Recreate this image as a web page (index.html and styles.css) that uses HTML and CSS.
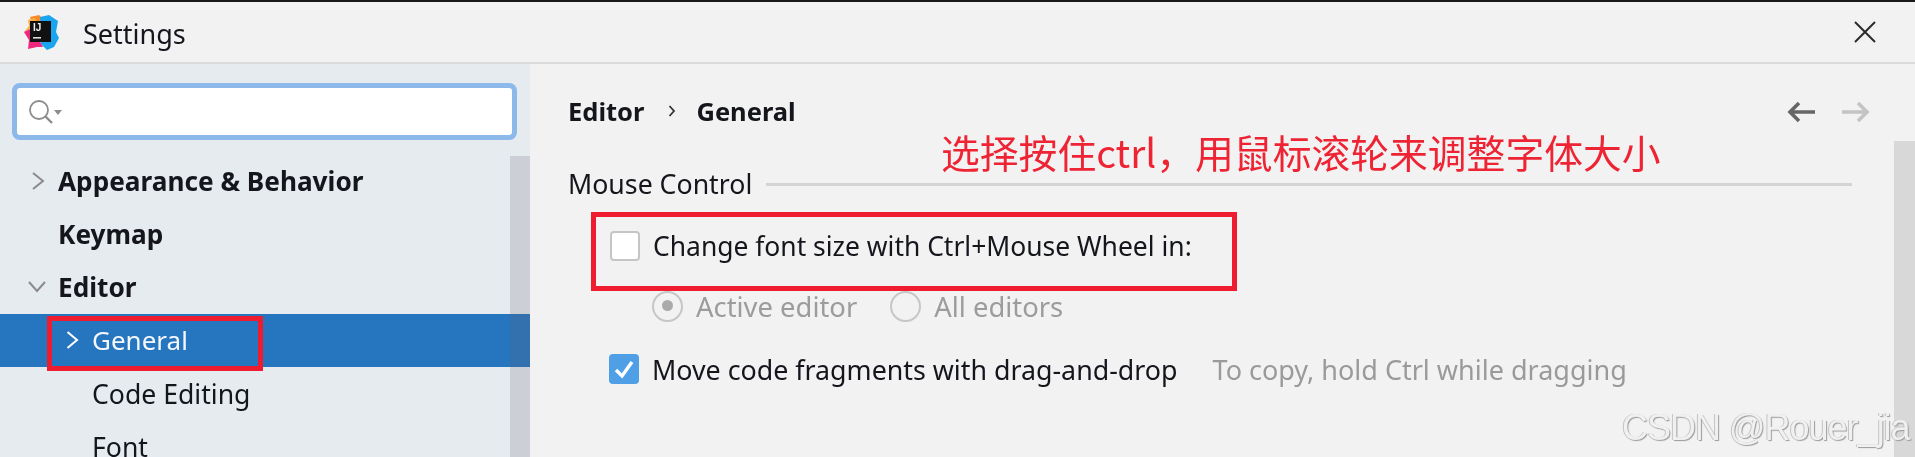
FILE: index.html
```html
<!DOCTYPE html>
<html lang="en">
<head>
<meta charset="utf-8">
<title>Settings</title>
<link rel="stylesheet" href="styles.css">
</head>
<body>
<div class="app">
  <header class="titlebar">
    <svg class="logo" width="36" height="36" viewBox="0 0 36 36">
      <path d="M7 3 L16 1 L20 5 L10 12 Z" fill="#f98a2c"/>
      <path d="M17 3 L26 1 L35 7 L33 18 L36 24 L31 33 L24 36 L18 30 Z" fill="#1aa5ee"/>
      <path d="M5 6 L12 4 L14 10 L8 14 L1 18 L6 12 Z" fill="#fbb03b"/>
      <path d="M1 18 L9 14 L14 22 L20 33 L14 33 L5 35 L6 26 Z" fill="#f0277e"/>
      <rect x="7" y="7" width="21" height="21" fill="#111"/>
      <text class="logo-text" x="10" y="17">IJ</text>
      <rect x="10" y="23" width="8" height="1.6" fill="#ddd"/>
    </svg>
    <span class="title">Settings</span>
    <svg class="close" width="22" height="22" viewBox="0 0 22 22"><path d="M1 1 L21 21 M21 1 L1 21" stroke="#2b2b2b" stroke-width="2" fill="none"/></svg>
  </header>
  <div class="main">
    <aside class="sidebar">
      <div class="search">
        <svg width="40" height="30" viewBox="0 0 40 30"><circle cx="12" cy="13" r="9" fill="none" stroke="#8d8d8d" stroke-width="1.8"/><path d="M18.5 19.5 L25 26" stroke="#8d8d8d" stroke-width="2.4"/><path d="M27 13 H35 L31 18 Z" fill="#8d8d8d"/></svg>
      </div>
      <ul class="tree">
        <li class="row strong"><svg class="chev" width="14" height="20" viewBox="0 0 14 20"><path d="M2 2 L12 10 L2 18" stroke="#8a8a8a" stroke-width="2" fill="none"/></svg><span>Appearance &amp; Behavior</span></li>
        <li class="row strong plain"><span>Keymap</span></li>
        <li class="row strong"><svg class="chev" width="18" height="12" viewBox="0 0 18 12"><path d="M1 1 L9 10 L17 1" stroke="#8a8a8a" stroke-width="2" fill="none"/></svg><span>Editor</span></li>
        <li class="row sub selected"><svg class="chev" width="13" height="20" viewBox="0 0 13 20"><path d="M1.5 2 L11 10 L1.5 18" stroke="#fff" stroke-width="2" fill="none"/></svg><span>General</span></li>
        <li class="row sub plain"><span>Code Editing</span></li>
        <li class="row sub plain"><span>Font</span></li>
      </ul>
      <div class="side-scroll"></div>
    </aside>
    <section class="content">
      <div class="crumbs">
        <span class="crumb">Editor</span>
        <svg class="crumb-sep" width="8" height="14" viewBox="0 0 8 14"><path d="M1.5 2 L6 7 L1.5 12" stroke="#333" stroke-width="1.8" fill="none"/></svg>
        <span class="crumb">General</span>
        <div class="nav">
          <svg width="28" height="22" viewBox="0 0 28 22"><path d="M28 11 H3 M12 2 L3 11 L12 20" stroke="#666" stroke-width="3.6" fill="none"/></svg>
          <svg width="28" height="22" viewBox="0 0 28 22"><path d="M0 11 H25 M16 2 L25 11 L16 20" stroke="#c4c4c4" stroke-width="3.6" fill="none"/></svg>
        </div>
      </div>
      <div class="group-head"><span>Mouse Control</span><i class="rule"></i></div>
      <div class="option first"><span class="checkbox"></span><span>Change font size with Ctrl+Mouse Wheel in:</span></div>
      <div class="radios">
        <span class="radio on"></span><span class="muted">Active editor</span>
        <span class="radio second"></span><span class="muted">All editors</span>
      </div>
      <div class="option last">
        <span class="checkbox checked"><svg width="22" height="20" viewBox="0 0 22 20"><path d="M3 11 L9 17 L19 3" stroke="#fff" stroke-width="3.4" fill="none"/></svg></span>
        <span>Move code fragments with drag-and-drop</span>
        <span class="hint">To copy, hold Ctrl while dragging</span>
      </div>
      <div class="content-scroll"></div>
    </section>
  </div>
  <div class="mark mark-general"></div>
  <div class="mark mark-option"></div>
  <div class="annotation">选择按住ctrl，用鼠标滚轮来调整字体大小</div>
  <div class="watermark">CSDN @Rouer_jia</div>
</div>
</body>
</html>
```

FILE: styles.css
```css
* { box-sizing: border-box; }
html, body { margin: 0; padding: 0; }
body { background: #f2f2f2; overflow: hidden; }
.app {
  position: relative;
  width: 1915px;
  height: 457px;
  overflow: hidden;
  display: flex;
  flex-direction: column;
  font-family: "Noto Sans", "Open Sans", sans-serif;
  font-size: 26.7px;
  color: #14161c;
  background: #f2f2f2;
  filter: blur(0.45px);
}
.titlebar {
  flex: none;
  height: 64px;
  border-top: 2px solid #1a1a1a;
  border-bottom: 2px solid #dadada;
  display: flex;
  align-items: center;
  padding: 0 39px 0 23px;
}
.logo { flex: none; }
.logo-text { font-family: "Liberation Sans", sans-serif; font-size: 10px; font-weight: 700; fill: #eee; }
.title { margin-left: 24px; font-size: 27px; position: relative; top: 1px; }
.close { margin-left: auto; }
.main { flex: 1; display: flex; min-height: 0; }
.sidebar {
  position: relative;
  flex: none;
  width: 530px;
  background: #e6ebf0;
  padding-top: 24px;
}
.search {
  margin-left: 17px;
  width: 495px;
  height: 47px;
  background: #fff;
  border-radius: 3px;
  box-shadow: 0 0 0 5px #8db8ea;
  display: flex;
  align-items: center;
  padding-left: 10px;
}
.tree { list-style: none; margin: 20px 0 0; padding: 0; }
.row { height: 53px; display: flex; align-items: center; padding-left: 31px; white-space: nowrap; }
.row .chev { flex: none; }
.strong { font-weight: 700; font-size: 26.2px; padding-bottom: 2px; }
.strong.plain { padding-left: 58px; }
.strong .chev { margin-right: 13px; }
.strong svg[height="12"] { margin-left: -3px; margin-right: 12px; }
.sub { font-size: 26.6px; }
.sub.plain { padding-left: 92px; }
.selected { background: #2675bf; color: #f4f8fc; padding-left: 66px; padding-bottom: 2px; font-size: 26px; }
.selected .chev { margin-right: 13px; }
.side-scroll {
  position: absolute;
  top: 92px;
  right: 0;
  bottom: 0;
  width: 20px;
  background: rgba(100, 100, 110, .2);
}
.content { position: relative; flex: 1; padding-left: 38px; }
.crumbs { display: flex; align-items: center; height: 50px; margin-top: 22px; padding-right: 43px; font-weight: 700; font-size: 25.5px; }
.crumb-sep { margin: 0 20px 0 24px; }
.nav { margin-left: auto; display: flex; gap: 27px; position: relative; left: -2px; top: 1px; }
.group-head { display: flex; align-items: center; margin-top: 22px; height: 50px; }
.rule { flex: 1; height: 3px; background: #d4d4d4; margin-left: 14px; margin-right: 63px; position: relative; top: 1px; }
.option { display: flex; align-items: center; white-space: nowrap; }
.option.first { margin-top: 16px; padding-left: 42px; height: 44px; font-size: 26.45px; }
.checkbox {
  flex: none;
  width: 30px;
  height: 30px;
  margin-right: 13px;
  background: #fff;
  border: 2px solid #c5c5c5;
  border-radius: 4px;
  display: flex;
  align-items: center;
  justify-content: center;
}
.checked { background: #4f9fe6; border-color: #4f9fe6; }
.radios { display: flex; align-items: center; margin-top: 16px; padding-left: 84px; height: 44px; font-size: 27.4px; }
.radio { flex: none; position: relative; width: 31px; height: 31px; border: 2.5px solid #c6c6c6; border-radius: 50%; margin-right: 13px; background: #f2f2f2; }
.radio.on::after { content: ""; position: absolute; left: 7.5px; top: 7.5px; width: 11px; height: 11px; border-radius: 50%; background: #aaa; }
.radio.second { margin-left: 33px; }
.muted { color: #9c9c9c; }
.option.last { margin-top: 19px; padding-left: 41px; height: 44px; font-size: 26.8px; }
.hint { margin-left: 35px; font-size: 27px; color: #9a9a9a; }
.content-scroll {
  position: absolute;
  top: 77px;
  right: 0;
  bottom: 0;
  width: 21px;
  background: #d8d8d8;
}
.mark { position: absolute; border: 5px solid #ee1c2e; }
.mark-general { left: 47px; top: 316px; width: 216px; height: 55px; }
.mark-option { left: 591px; top: 212px; width: 646px; height: 79px; }
.annotation {
  position: absolute;
  left: 941px;
  top: 124px;
  font-family: "Noto Sans CJK SC", "Noto Sans", sans-serif;
  font-size: 38.8px;
  line-height: 54px;
  color: #ee2434;
  white-space: nowrap;
}
.watermark {
  position: absolute;
  left: 1622px;
  top: 404px;
  font-family: "Liberation Sans", sans-serif;
  font-size: 36px;
  line-height: 48px;
  letter-spacing: -1px;
  color: #f0f0f0;
  text-shadow: 1px 1px 1px #9a9a9a, -1px 0 0 #c4c4c4;
  white-space: nowrap;
}
```
